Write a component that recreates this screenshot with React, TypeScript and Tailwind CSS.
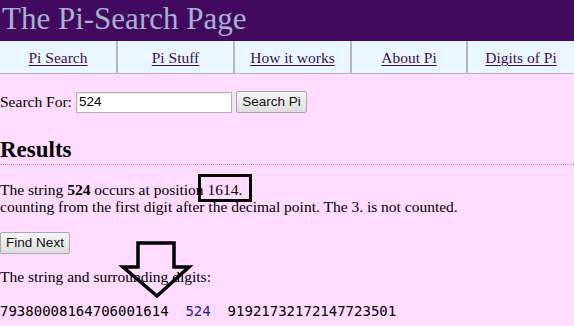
import React from "react";

const navItems = ["Pi Search", "Pi Stuff", "How it works", "About Pi", "Digits of Pi"];

export default function App() {
  return (
    <div className="relative min-h-[326px] w-[574px] overflow-hidden bg-[#ffdcff] font-['Liberation_Serif',serif] text-[15.5px] text-black">
      <div className="h-[41px] bg-[#420a5e] pl-[2px] text-[31px] leading-[38px] text-[#a6b2d0]">
        The Pi-Search Page
      </div>
      <div className="grid h-[33px] grid-cols-[116px_117px_117px_116px_1fr] border-b-[1px] border-[#b4b4b4] bg-[#eaf6ff]">
        {navItems.map((t, i) => (
          <div
            key={t}
            className={
              "flex items-center justify-center pt-[2px] text-[15.5px] " +
              (i > 0 ? "border-l-[2px] border-[#b8b8b8]" : "")
            }
          >
            <a href="#" className="text-[#3a0d55] underline decoration-[1px] underline-offset-[2px]">
              {t}
            </a>
          </div>
        ))}
      </div>

      <div className="mt-[17px] flex h-[22px] items-center">
        <span className="leading-[18px]">Search For:</span>
        <div className="ml-[4px] flex h-[21px] w-[156px] items-center border border-[#b0b0b0] bg-white px-[2px] font-['Liberation_Sans',sans-serif] text-[13.5px] text-black shadow-[inset_1px_1px_1px_rgba(0,0,0,0.08)]">
          524
        </div>
        <button className="ml-[4px] h-[22px] w-[71px] rounded-[2px] border border-[#a8a8a8] bg-gradient-to-b from-[#f6f6f6] to-[#dedede] font-['Liberation_Sans',sans-serif] text-[13.5px] text-[#111]">
          Search Pi
        </button>
      </div>

      <div className="mt-[23px] h-[29px] border-b-[1px] border-dotted border-[#ff6f9a] text-[23px] font-bold leading-[27px]">
        Results
      </div>

      <div className="mt-[16px] leading-[17px]">
        The string <b>524</b> occurs at position 1614.
        <br />
        counting from the first digit after the decimal point. The 3. is not counted.
      </div>

      <button className="mt-[17px] block h-[22px] w-[70px] rounded-[2px] border border-[#a8a8a8] bg-gradient-to-b from-[#f6f6f6] to-[#dedede] font-['Liberation_Sans',sans-serif] text-[13.5px] text-[#111]">
        Find Next
      </button>

      <div className="mt-[14px] leading-[18px]">The string and surrounding digits:</div>

      <div className="mt-[17px] whitespace-pre font-['DejaVu_Sans_Mono',monospace] text-[14px] leading-[17px]">
        {"79380008164706001614  "}
        <span className="text-[#1a1a9c]">524</span>
        {"  91921732172147723501"}
      </div>

      <div className="absolute left-[198px] top-[174px] h-[28px] w-[54px] border-[3px] border-black" />

      <svg className="absolute left-[118px] top-[238px]" width="76" height="64" viewBox="118 238 76 64">
        <polygon
          points="138,243 174,243 174,267 189,267 157,296 123,267 138,267"
          fill="none"
          stroke="black"
          strokeWidth="3.5"
          strokeLinejoin="miter"
        />
      </svg>
    </div>
  );
}
